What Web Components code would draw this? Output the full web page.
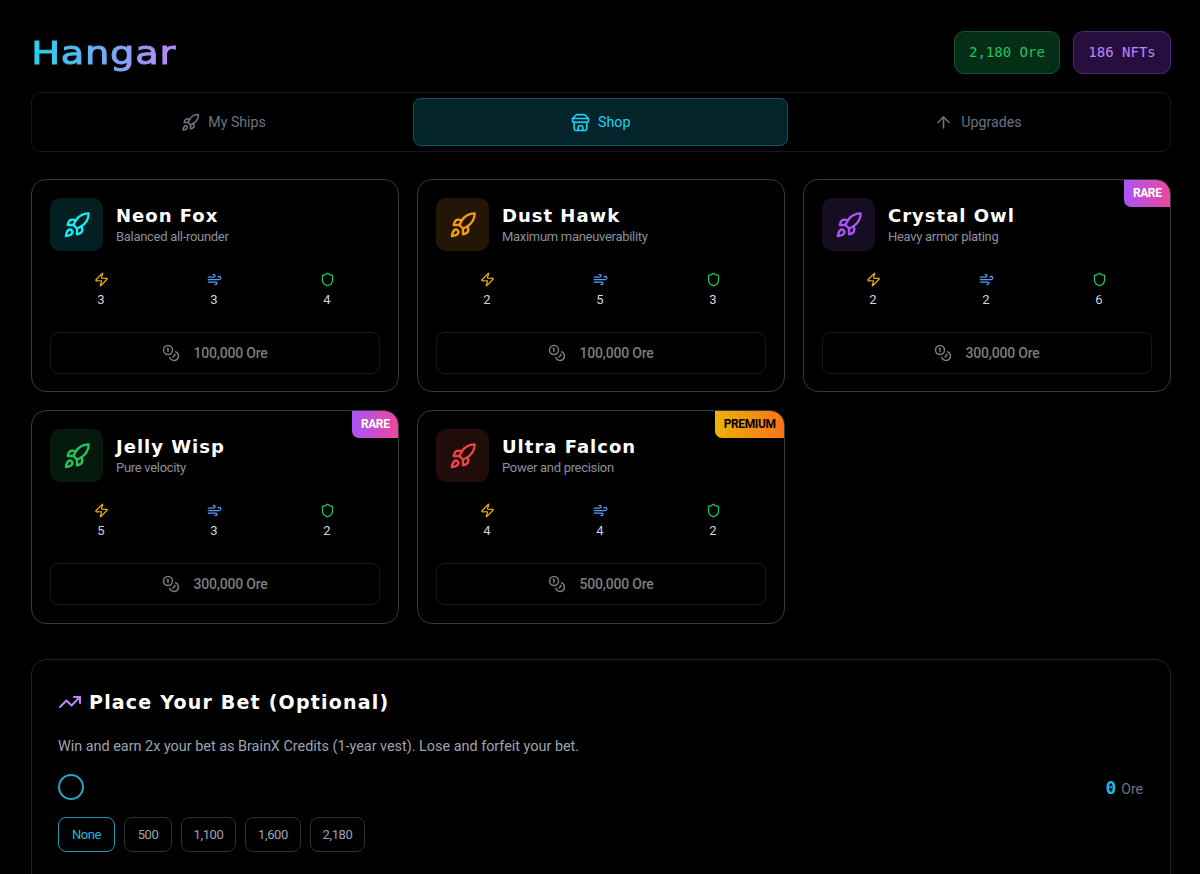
<!DOCTYPE html>
<html lang="en">
<head>
<meta charset="utf-8">
<title>Hangar</title>
<style>
  html, body { margin: 0; background: #000; height: 100%; overflow: hidden; }
  body {
    --body-font: Roboto, sans-serif;
    --head-font: "DejaVu Sans", sans-serif;
    --mono-font: "DejaVu Sans Mono", monospace;
    font-family: var(--body-font);
    color: #fff;
  }
</style>
</head>
<body>
<hangar-page></hangar-page>

<script>
const ICONS = {
  rocket: '<path d="M4.5 16.5c-1.5 1.26-2 5-2 5s3.74-.5 5-2c.71-.84.7-2.13-.09-2.91a2.18 2.18 0 0 0-2.91-.09z"/><path d="m12 15-3-3a22 22 0 0 1 2-3.95A12.88 12.88 0 0 1 22 2c0 2.72-.78 7.5-6 11a22.35 22.35 0 0 1-4 2z"/><path d="M9 12H4s.55-3.03 2-4c1.62-1.08 5 0 5 0"/><path d="M12 15v5s3.03-.55 4-2c1.08-1.62 0-5 0-5"/>',
  store: '<path d="m2 7 4.41-4.41A2 2 0 0 1 7.83 2h8.34a2 2 0 0 1 1.42.59L22 7"/><path d="M4 12v8a2 2 0 0 0 2 2h12a2 2 0 0 0 2-2v-8"/><path d="M15 22v-4a2 2 0 0 0-2-2h-2a2 2 0 0 0-2 2v4"/><path d="M2 7h20"/><path d="M22 7v3a2 2 0 0 1-2 2a2.7 2.7 0 0 1-1.59-.63.7.7 0 0 0-.82 0A2.7 2.7 0 0 1 16 12a2.7 2.7 0 0 1-1.59-.63.7.7 0 0 0-.82 0A2.7 2.7 0 0 1 12 12a2.7 2.7 0 0 1-1.59-.63.7.7 0 0 0-.82 0A2.7 2.7 0 0 1 8 12a2.7 2.7 0 0 1-1.59-.63.7.7 0 0 0-.82 0A2.7 2.7 0 0 1 4 12a2 2 0 0 1-2-2V7"/>',
  up: '<path d="m5 12 7-7 7 7"/><path d="M12 19V5"/>',
  zap: '<path d="M4 14a1 1 0 0 1-.78-1.63l9.9-10.2a.5.5 0 0 1 .86.46l-1.92 6.02A1 1 0 0 0 13 10h7a1 1 0 0 1 .78 1.63l-9.9 10.2a.5.5 0 0 1-.86-.46l1.92-6.02A1 1 0 0 0 11 14z"/>',
  wind: '<path d="M12.8 19.6A2 2 0 1 0 14 16H2"/><path d="M17.5 8a2.5 2.5 0 1 1 2 4H2"/><path d="M9.8 4.4A2 2 0 1 1 11 8H2"/>',
  shield: '<path d="M20 13c0 5-3.5 7.5-7.66 8.95a1 1 0 0 1-.67-.01C7.5 20.5 4 18 4 13V6a1 1 0 0 1 1-1c2 0 4.5-1.2 6.24-2.72a1.17 1.17 0 0 1 1.52 0C14.51 3.81 17 5 19 5a1 1 0 0 1 1 1z"/>',
  coins: '<circle cx="8" cy="8" r="6"/><path d="M18.09 10.37A6 6 0 1 1 10.34 18"/><path d="M7 6h1v4"/><path d="m16.71 13.88.7.71-2.82 2.82"/>',
  trend: '<polyline points="22 7 13.5 15.5 8.5 10.5 2 17"/><polyline points="16 7 22 7 22 13"/>',
};

function icon(name, size, color) {
  return `<svg width="${size}" height="${size}" viewBox="0 0 24 24" fill="none" stroke="${color}" stroke-width="2" stroke-linecap="round" stroke-linejoin="round">${ICONS[name]}</svg>`;
}

class StatChip extends HTMLElement {
  constructor() {
    super();
    this._shadowRoot = this.attachShadow({ mode: 'open' });
    this._shadowRoot.innerHTML = `
      <style>
        :host {
          display: block;
          box-sizing: border-box;
          height: 43px;
          padding: 0 14.25px;
          line-height: 41px;
          border: 1px solid var(--line);
          border-radius: 10px;
          background: var(--fill);
          color: var(--ink);
          font-family: var(--mono-font);
          font-size: 14px;
        }
      </style>
      <slot></slot>`;
  }
}

class TabItem extends HTMLElement {
  constructor() {
    super();
    this._shadowRoot = this.attachShadow({ mode: 'open' });
    const active = this.hasAttribute('active');
    const color = active ? '#22d3ee' : '#6b7280';
    this._shadowRoot.innerHTML = `
      <style>
        :host {
          display: flex;
          align-items: center;
          justify-content: center;
          gap: 8px;
          height: 48px;
          box-sizing: border-box;
          border: 1px solid ${active ? '#0e5561' : 'transparent'};
          border-radius: 8px;
          background: ${active ? '#03242a' : 'transparent'};
          color: ${color};
          font-size: 14.2px;
        }
        svg { display: block; }
      </style>
      ${icon(this.getAttribute('icon'), 19, color)}
      <slot></slot>`;
  }
}

class ShipCard extends HTMLElement {
  constructor() {
    super();
    this._shadowRoot = this.attachShadow({ mode: 'open' });
  }

  connectedCallback() {
    this.render();
  }

  render() {
    const color = this.getAttribute('color');
    const tint = this.getAttribute('tint');
    const stats = this.getAttribute('stats').split(',');
    const badge = this.getAttribute('badge');
    let badgeString = '';
    if (badge) {
      badgeString = `<div class="badge ${badge.toLowerCase()}">${badge}</div>`;
    }

    this._shadowRoot.innerHTML = `
      <style>
        :host {
          display: block;
          position: relative;
          box-sizing: border-box;
          height: 213.25px;
          padding: 18px;
          border: 1px solid #343a46;
          border-radius: 15px;
          background: #000;
        }
        .top { display: flex; align-items: center; gap: 13px; }
        .thumb {
          width: 53px;
          height: 53px;
          border-radius: 10px;
          background: ${tint};
          display: flex;
          align-items: center;
          justify-content: center;
        }
        .label { margin-top: 2px; }
        .name {
          font-family: var(--head-font);
          font-weight: 700;
          font-size: 18px;
          line-height: 22px;
          letter-spacing: 1px;
          color: #fff;
        }
        .desc { font-size: 13px; line-height: 18px; margin-top: 1px; letter-spacing: -0.3px; color: #8a909b; }
        .stats {
          display: grid;
          grid-template-columns: repeat(3, 1fr);
          gap: 9px;
          margin: 21px 1px 0 -1px;
          text-align: center;
        }
        .stat svg { display: block; margin: 0 auto; }
        .stat div { font-size: 13px; line-height: 18px; margin-top: 4px; color: #d1d5db; }
        .price {
          display: flex;
          align-items: center;
          justify-content: center;
          gap: 13px;
          box-sizing: border-box;
          height: 42px;
          margin-top: 23px;
          border: 1px solid #15181e;
          border-radius: 8px;
          color: #7c7c7c;
          font-size: 14px;
          font-weight: 500;
          letter-spacing: -0.2px;
        }
        .badge {
          position: absolute;
          top: 0;
          right: 0;
          height: 27px;
          line-height: 27px;
          padding: 0 8.5px;
          border-radius: 0 14px 0 7px;
          font-size: 12px;
          font-weight: 700;
          letter-spacing: -0.4px;
        }
        .rare { background: linear-gradient(90deg, #a855f7, #ec4899); color: #fff; }
        .premium { background: linear-gradient(90deg, #eab308, #f97316); color: #000; }
      </style>
      ${badgeString}
      <div class="top">
        <div class="thumb">${icon('rocket', 28, color)}</div>
        <div class="label">
          <div class="name">${this.getAttribute('name')}</div>
          <div class="desc">${this.getAttribute('desc')}</div>
        </div>
      </div>
      <div class="stats">
        <div class="stat">${icon('zap', 15, '#eab308')}<div>${stats[0]}</div></div>
        <div class="stat">${icon('wind', 15, '#5b9cf5')}<div>${stats[1]}</div></div>
        <div class="stat">${icon('shield', 15, '#22c55e')}<div>${stats[2]}</div></div>
      </div>
      <div class="price">${icon('coins', 18, '#7c7c7c')}<span>${this.getAttribute('price')} Ore</span></div>
    `;
  }
}

class BetPanel extends HTMLElement {
  constructor() {
    super();
    this._shadowRoot = this.attachShadow({ mode: 'open' });
    this._shadowRoot.innerHTML = `
      <style>
        :host {
          display: block;
          box-sizing: border-box;
          height: 240px;
          padding: 27px 27px 0 26px;
          border: 1px solid #10292c;
          border-radius: 15px;
        }
        .title { display: flex; align-items: center; gap: 7px; height: 30px; }
        .title span {
          font-family: var(--head-font);
          font-weight: 700;
          font-size: 19px;
          letter-spacing: 1.2px;
        }
        p { margin: 20px 0 0; font-size: 14.4px; line-height: 20px; color: #9ca3af; }
        .amount { display: flex; align-items: center; justify-content: space-between; margin-top: 17px; }
        .thumb { width: 26px; height: 26px; box-sizing: border-box; border: 2px solid #22a6c3; border-radius: 50%; }
        .ore { font-size: 14px; color: #6b7280; }
        .ore b { font-family: var(--mono-font); font-size: 18px; color: #22b8dc; margin-right: 1.5px; }
        .options { display: flex; gap: 9px; margin-top: 17px; }
        button {
          height: 35px;
          padding: 0;
          border: 1px solid #2b303a;
          border-radius: 8px;
          background: #000;
          color: #9ca3af;
          font: 13px var(--body-font);
          letter-spacing: -0.4px;
        }
        button.on { border-color: #1b9ab5; color: #22b8dc; }
      </style>
      <div class="title">${icon('trend', 24, '#c084fc')}<span>Place Your Bet (Optional)</span></div>
      <p>Win and earn 2x your bet as BrainX Credits (1-year vest). Lose and forfeit your bet.</p>
      <div class="amount">
        <div class="thumb"></div>
        <div class="ore"><b>0</b> Ore</div>
      </div>
      <div class="options">
        <button type="button" class="on" style="width:57px">None</button>
        <button type="button" style="width:48px">500</button>
        <button type="button" style="width:55px">1,100</button>
        <button type="button" style="width:56px">1,600</button>
        <button type="button" style="width:55px">2,180</button>
      </div>`;
  }
}

class HangarPage extends HTMLElement {
  constructor() {
    super();
    this._shadowRoot = this.attachShadow({ mode: 'open' });
    this._shadowRoot.innerHTML = `
      <style>
        :host { display: block; box-sizing: border-box; padding: 31px 29px 0 31px; }
        header { display: flex; align-items: center; justify-content: space-between; height: 43px; }
        h1 {
          margin: 0 0 0 -1px;
          padding: 1px 1px 0;
          font-family: var(--head-font);
          font-weight: 400;
          font-size: 32px;
          line-height: 43px;
          letter-spacing: 0.6px;
          transform: scaleX(1.2);
          transform-origin: left center;
          -webkit-text-stroke: 1px transparent;
          background: linear-gradient(90deg, #22d3ee, #c084fc);
          -webkit-background-clip: text;
          background-clip: text;
          color: transparent;
        }
        .chips { display: flex; gap: 13px; }
        .tabs {
          display: grid;
          grid-template-columns: repeat(3, 1fr);
          gap: 2px;
          margin-top: 18px;
          padding: 5px 4.5px 5px 4px;
          border: 1px solid #14171e;
          border-radius: 10px;
        }
        .ships {
          display: grid;
          grid-template-columns: repeat(3, 1fr);
          gap: 18px;
          margin-top: 27px;
        }
        bet-panel { margin-top: 35.5px; }
      </style>
      <header>
        <h1>Hangar</h1>
        <div class="chips">
          <stat-chip style="--line:#14532d;--fill:#052e16;--ink:#22c55e">2,180 Ore</stat-chip>
          <stat-chip style="--line:#4c2a78;--fill:#260f3f;--ink:#c084fc">186 NFTs</stat-chip>
        </div>
      </header>
      <div class="tabs">
        <tab-item icon="rocket">My Ships</tab-item>
        <tab-item icon="store" active>Shop</tab-item>
        <tab-item icon="up">Upgrades</tab-item>
      </div>
      <div class="ships">
        <ship-card name="Neon Fox" desc="Balanced all-rounder" color="#14eef2" tint="#031f22" stats="3,3,4" price="100,000"></ship-card>
        <ship-card name="Dust Hawk" desc="Maximum maneuverability" color="#f59e0b" tint="#231606" stats="2,5,3" price="100,000"></ship-card>
        <ship-card name="Crystal Owl" desc="Heavy armor plating" color="#a855f7" tint="#170d22" stats="2,2,6" price="300,000" badge="RARE"></ship-card>
        <ship-card name="Jelly Wisp" desc="Pure velocity" color="#22c55e" tint="#051a0c" stats="5,3,2" price="300,000" badge="RARE"></ship-card>
        <ship-card name="Ultra Falcon" desc="Power and precision" color="#ef4444" tint="#210c0c" stats="4,4,2" price="500,000" badge="PREMIUM"></ship-card>
      </div>
      <bet-panel></bet-panel>`;
  }
}

customElements.define('stat-chip', StatChip);
customElements.define('tab-item', TabItem);
customElements.define('ship-card', ShipCard);
customElements.define('bet-panel', BetPanel);
customElements.define('hangar-page', HangarPage);
</script>
</body>
</html>
